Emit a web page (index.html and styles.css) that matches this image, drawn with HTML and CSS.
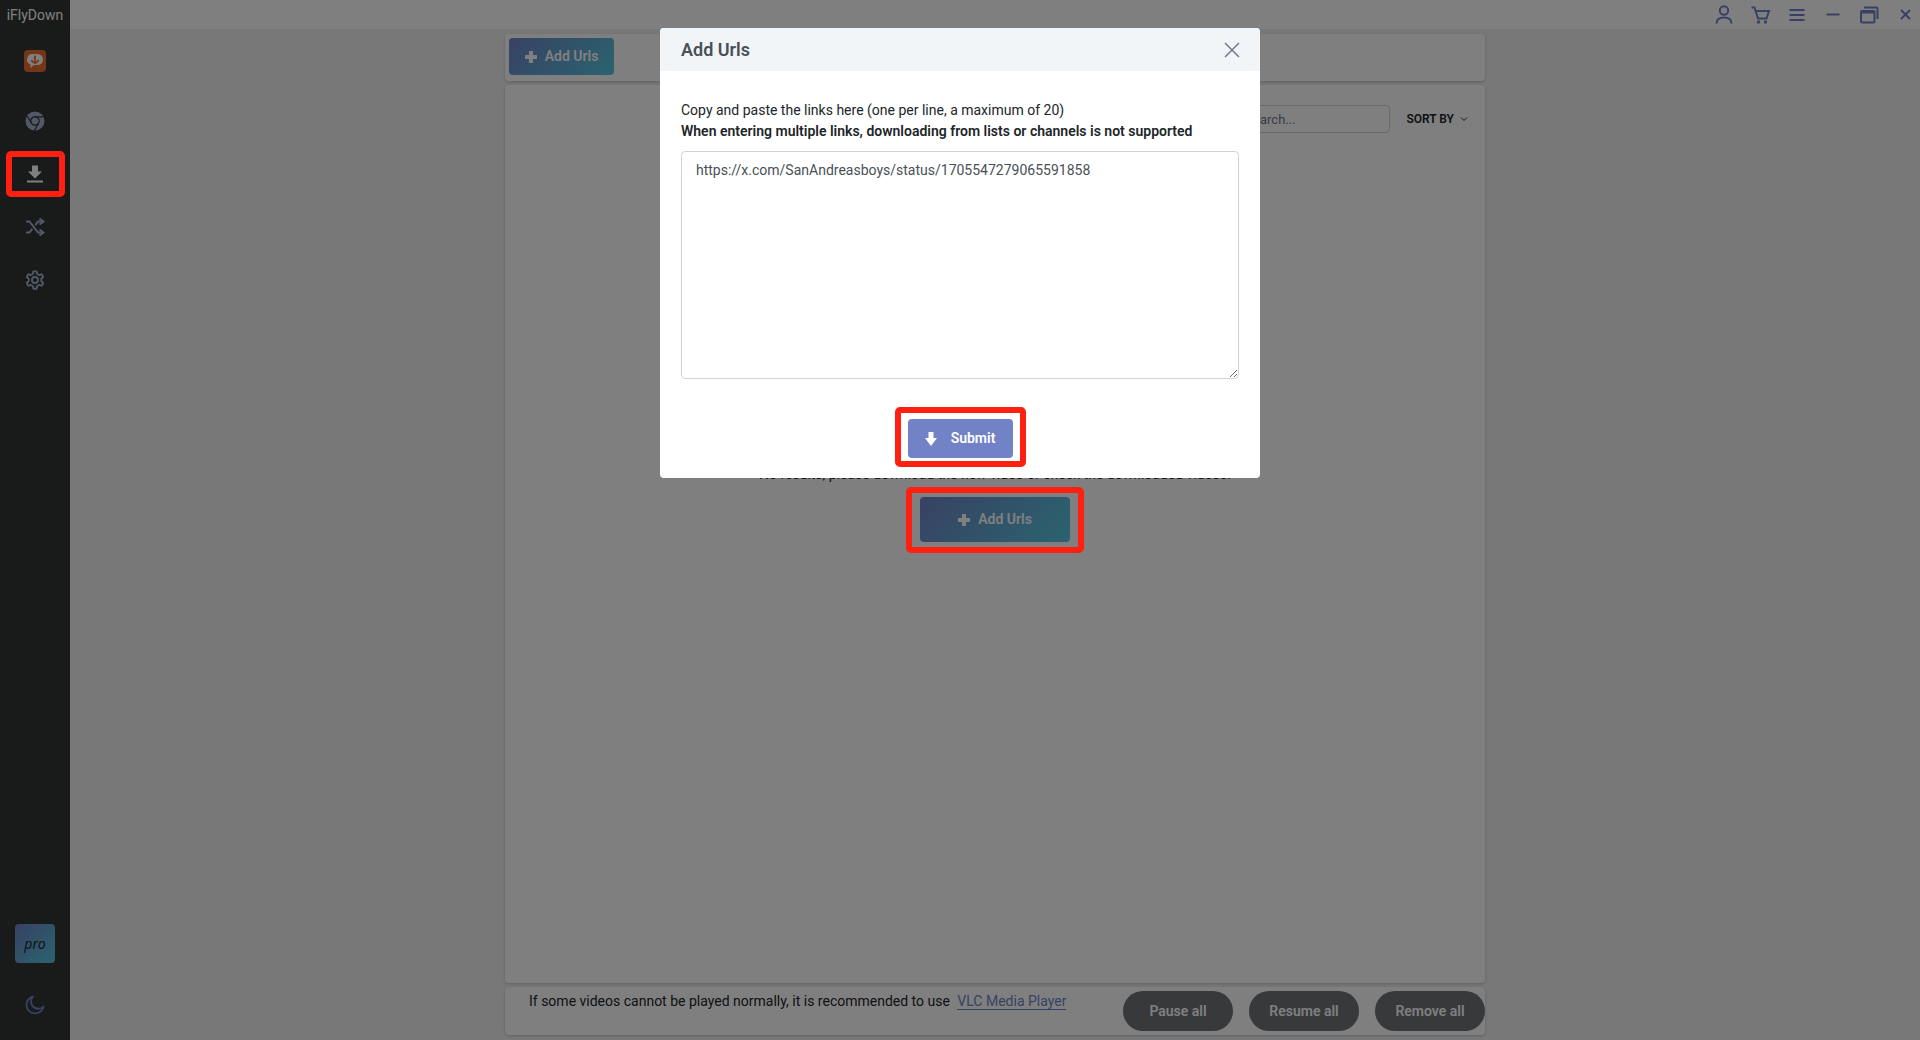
FILE: index.html
```html
<!DOCTYPE html>
<html lang="en">
<head>
    <meta charset="UTF-8">
    <meta name="viewport" content="width=device-width, initial-scale=1.0">
    <title>iFlyDown</title>
    <link rel="stylesheet" href="styles.css">
</head>
<body>
    <nav class="sidebar">
        <div class="brand">iFlyDown</div>
        <a href="#" class="logo" aria-label="Home">
            <svg width="22" height="22" viewBox="0 0 22 22">
                <rect width="22" height="22" rx="4" fill="#ea6a2e"/>
                <path d="M9 4h4.500a5.500 5.500 0 0 1 0 11H10l-3.500 3v-3.400A5.500 5.500 0 0 1 9 4z" fill="#fff"/>
                <path d="M11 5.500v7M7.500 10c.8 1.800 2 2.800 3.500 2.800s2.700-1 3.500-2.800" fill="none" stroke="#ea6a2e" stroke-width="1.800"/>
            </svg>
        </a>
        <a href="#" class="nav-link" aria-label="Browser">
            <svg width="20" height="20" viewBox="0 0 20 20">
                <circle cx="10" cy="10" r="9.500" fill="#a6b0cf"/>
                <g fill="none" stroke="#303634" stroke-width="1.200">
                    <circle cx="10" cy="10" r="4.200"/>
                    <path d="M10 5.800h8.500M6.400 12.100L2.200 5M13.600 12.100L9.500 19.500"/>
                </g>
            </svg>
        </a>
        <a href="#" class="nav-link active marked" aria-label="Download">
            <svg width="18" height="18" viewBox="0 0 18 18" fill="currentColor">
                <path d="M6 0.500h6v6h4L9 13.500 2 6.500h4zM1 15.500h16v2H1z"/>
            </svg>
        </a>
        <a href="#" class="nav-link" aria-label="Convert">
            <svg width="20" height="20" viewBox="0 0 20 20" fill="none" stroke="currentColor" stroke-width="2">
                <path d="M1 4.500h3.500l8.500 11h4M1 15.500h3.500l2.800-3.600M10.200 8.100L13 4.500h4"/>
                <path d="M14.500 1.500l4 3-4 3M14.500 12.500l4 3-4 3"/>
            </svg>
        </a>
        <a href="#" class="nav-link" aria-label="Settings">
            <svg width="22" height="22" viewBox="0 0 24 24" fill="none" stroke="currentColor" stroke-width="2" stroke-linejoin="round">
                <circle cx="12" cy="12" r="3.300"/>
                <path d="M10.300 2.500h3.400l.6 2.800 2.300 1.300 2.700-.9 1.700 3-2.100 1.900v2.800l2.100 1.900-1.700 3-2.700-.9-2.300 1.300-.6 2.800h-3.400l-.6-2.800-2.300-1.300-2.700.9-1.700-3 2.100-1.900v-2.800L3 8.700l1.700-3 2.700.9 2.300-1.300z"/>
            </svg>
        </a>
        <button type="button" class="pro">pro</button>
        <button type="button" class="theme" aria-label="Dark mode">
            <svg width="20" height="20" viewBox="0 0 20 20" fill="none" stroke="currentColor" stroke-width="1.800" stroke-linejoin="round">
                <path d="M8 1.500A8.600 8.600 0 1 0 18.500 11.500 6.800 6.800 0 0 1 8 1.500z"/>
            </svg>
        </button>
    </nav>

    <div class="page">
        <header class="topbar">
            <button type="button" aria-label="Account">
                <svg viewBox="0 0 20 20"><circle cx="9" cy="5.500" r="4.200"/><path d="M1.500 18.500c0-4 3-6 7.500-6s7.500 2 7.500 6"/></svg>
            </button>
            <button type="button" aria-label="Cart">
                <svg viewBox="0 0 20 20"><path d="M0.500 2.500h3L7 13.500h8.500L18 6H5"/><circle cx="7.500" cy="17" r="0.700"/><circle cx="14.500" cy="17" r="0.700"/></svg>
            </button>
            <button type="button" aria-label="Menu">
                <svg viewBox="0 0 20 20"><path d="M2.500 5h15M2.500 10h15M2.500 15h15"/></svg>
            </button>
            <button type="button" aria-label="Minimize">
                <svg viewBox="0 0 20 20"><path d="M3.500 9.500h13"/></svg>
            </button>
            <button type="button" aria-label="Restore">
                <svg viewBox="0 0 20 20"><rect x="2" y="6" width="13.500" height="11.500" rx="1"/><path d="M2 7.500h13.500M5 2.500h12.500a1 1 0 0 1 1 1V14"/></svg>
            </button>
            <button type="button" aria-label="Close">
                <svg viewBox="0 0 20 20"><path d="M6 5l9 9M15 5l-9 9"/></svg>
            </button>
        </header>

        <main class="content">
            <section class="card toolbar">
                <button type="button" class="btn btn-gradient">
                    <svg width="12" height="12" viewBox="0 0 12 12" fill="currentColor"><path d="M4 0h4v4h4v4H8v4H4V8H0V4h4z"/></svg>
                    Add Urls
                </button>
            </section>

            <section class="card list">
                <div class="filters">
                    <input type="search" class="search" placeholder="Search..." aria-label="Search">
                    <button type="button" class="sort">
                        SORT BY
                        <svg width="8" height="8" viewBox="0 0 8 8" fill="none" stroke="currentColor"><path d="M1 2.500l3 3 3-3"/></svg>
                    </button>
                </div>
                <div class="empty">
                    <p>No results, please download the new video or check the downloaded videos.</p>
                    <button type="button" class="btn btn-gradient btn-large marked">
                        <svg width="12" height="12" viewBox="0 0 12 12" fill="currentColor"><path d="M4 0h4v4h4v4H8v4H4V8H0V4h4z"/></svg>
                        Add Urls
                    </button>
                </div>
            </section>

            <footer class="card footer">
                <p>If some videos cannot be played normally, it is recommended to use <a href="#">VLC Media Player</a></p>
                <div class="actions">
                    <button type="button" class="pill">Pause all</button>
                    <button type="button" class="pill">Resume all</button>
                    <button type="button" class="pill">Remove all</button>
                </div>
            </footer>
        </main>
    </div>

    <div class="backdrop">
        <form class="modal" role="dialog" aria-labelledby="modal-title">
            <div class="modal-header">
                <h2 id="modal-title">Add Urls</h2>
                <button type="button" class="close" aria-label="Close dialog">
                    <svg width="16" height="16" viewBox="0 0 16 16" fill="none" stroke="currentColor" stroke-width="1.500"><path d="M1 1l14 14M15 1L1 15"/></svg>
                </button>
            </div>
            <div class="modal-body">
                <label for="urls">
                    Copy and paste the links here (one per line, a maximum of 20)
                    <strong>When entering multiple links, downloading from lists or channels is not supported</strong>
                </label>
                <textarea id="urls" spellcheck="false">https://x.com/SanAndreasboys/status/1705547279065591858</textarea>
                <button type="button" class="btn btn-submit marked">
                    <svg width="12" height="14" viewBox="0 0 12 14" fill="currentColor"><path d="M3.500 0h5v6H12l-6 8-6-8h3.500z"/></svg>
                    Submit
                </button>
            </div>
        </form>
    </div>
</body>
</html>
```
FILE: styles.css
```css
* {
    box-sizing: border-box;
}
body {
    display: flex;
    height: 100vh;
    margin: 0;
    font-family: Roboto, "Liberation Sans", sans-serif;
    font-size: 14px;
    line-height: 21px;
    color: #212529;
    background: #f0f0f0;
}
p {
    margin: 0;
}
button {
    padding: 0;
    border: none;
    background: none;
    font: inherit;
    color: inherit;
    cursor: pointer;
}
svg {
    display: block;
}

/* sidebar */
.sidebar {
    display: flex;
    flex-direction: column;
    align-items: center;
    flex: none;
    width: 70px;
    padding-bottom: 25px;
    background: #303634;
    color: #a6b0cf;
}
.brand {
    padding: 5px 0 24px;
    color: #fff;
}
.logo {
    margin-bottom: 32px;
}
.nav-link {
    display: flex;
    align-items: center;
    justify-content: center;
    width: 47px;
    height: 34px;
    margin-bottom: 19px;
    color: #a6b0cf;
}
.nav-link.active {
    color: #fff;
}
.pro {
    width: 40px;
    height: 39px;
    margin-top: auto;
    margin-bottom: 32px;
    border-radius: 4px;
    background: linear-gradient(135deg, #7183c6, #54c8e0);
    color: #212529;
    font-family: "Noto Sans", sans-serif;
    font-style: italic;
}
.theme {
    color: #7183c6;
}

/* top bar */
.page {
    display: flex;
    flex-direction: column;
    flex: 1;
    min-width: 0;
}
.topbar {
    display: flex;
    align-items: center;
    justify-content: flex-end;
    gap: 16px;
    height: 29px;
    padding-right: 5px;
    background: #fff;
    color: #7183c6;
}
.topbar svg {
    width: 20px;
    height: 20px;
    fill: none;
    stroke: currentColor;
    stroke-width: 2;
}

/* content */
.content {
    display: flex;
    flex-direction: column;
    flex: 1;
    gap: 4px;
    width: 100%;
    max-width: 980px;
    margin: 0 auto;
    padding: 5px 0;
}
.card {
    border-radius: 4px;
    background: #fff;
    box-shadow: 0 1px 3px rgba(0, 0, 0, 0.2);
}
.toolbar {
    height: 47px;
    padding: 4px;
}
.btn {
    display: flex;
    align-items: center;
    justify-content: center;
    gap: 8px;
    width: 105px;
    height: 37px;
    border-radius: 4px;
    color: #fff;
    font-weight: 600;
}
.btn-gradient {
    background: linear-gradient(135deg, #7183c6, #54c8e0);
}
.btn-large {
    width: 150px;
    height: 45px;
}
.list {
    flex: 1;
    padding: 20px 17px;
}
.filters {
    display: flex;
    align-items: center;
    justify-content: flex-end;
    gap: 16px;
}
.search {
    width: 158px;
    height: 28px;
    padding: 0 12px;
    border: 1px solid #ced4da;
    border-radius: 4px;
    background: #fff;
    font: inherit;
    font-size: 13px;
}
.search::placeholder {
    color: #74788d;
}
.sort {
    display: flex;
    align-items: center;
    gap: 6px;
    font-size: 12px;
    font-weight: 600;
}
.empty {
    display: flex;
    flex-direction: column;
    align-items: center;
    gap: 12px;
    padding-top: 331px;
}
.footer {
    display: flex;
    justify-content: space-between;
    height: 48px;
    padding: 4px 0 4px 24px;
}
.footer a {
    margin-left: 4px;
    border-bottom: 1px solid #7183c6;
    color: #7183c6;
    text-decoration: none;
}
.actions {
    display: flex;
    gap: 16px;
}
.pill {
    width: 110px;
    height: 40px;
    border-radius: 20px;
    background: #707275;
    color: #fff;
    font-weight: 600;
}

/* modal */
.backdrop {
    position: fixed;
    inset: 0;
    z-index: 10;
    padding-top: 28px;
    background: rgba(0, 0, 0, 0.5);
}
.modal {
    max-width: 600px;
    margin: 0 auto;
    border-radius: 4px;
    background: #fff;
    overflow: hidden;
}
.modal-header {
    display: flex;
    align-items: center;
    justify-content: space-between;
    height: 43px;
    padding: 0 20px 0 21px;
    background: #f1f5f8;
    color: #495057;
}
.modal-header h2 {
    margin: 0;
    font-size: 18px;
    font-weight: 600;
}
.close {
    color: #74788d;
}
.modal-body {
    display: flex;
    flex-direction: column;
    align-items: center;
    padding: 29px 21px 20px;
}
.modal-body label {
    width: 100%;
}
.modal-body strong {
    display: block;
    font-weight: 600;
}
textarea {
    width: 100%;
    height: 228px;
    margin: 9px 0 40px;
    padding: 8px 14px;
    border: 1px solid #ced4da;
    border-radius: 4px;
    font: inherit;
    color: #495057;
    resize: vertical;
}
.btn-submit {
    gap: 14px;
    height: 39px;
    background: #7183c6;
}

/* red highlight frames, drawn above the backdrop */
.marked {
    position: relative;
}
.marked::after {
    content: "";
    position: absolute;
    inset: -6px;
    z-index: 20;
    border: 6px solid #ff2012;
    border-radius: 5px;
}
.btn-large::after {
    inset: -10px -14px -11px;
}
.btn-submit::after {
    inset: -12px -13px -9px;
}
```
